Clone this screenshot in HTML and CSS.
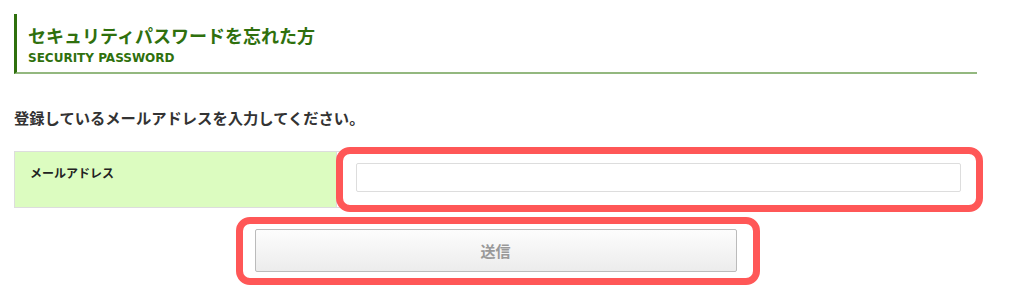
FILE: index.html
```html
<!DOCTYPE html>
<html lang="ja">

<head>
    <meta charset="UTF-8" />
    <title>セキュリティパスワードを忘れた方</title>
    <link rel="stylesheet" href="styles.css">
</head>

<body>
    <div class="page">
        <!-- 見出し -->
        <div class="heading">
            <h1>セキュリティパスワードを忘れた方</h1>
            <p class="sub">SECURITY PASSWORD</p>
        </div>

        <p class="lead">登録しているメールアドレスを入力してください。</p>

        <table class="form-table">
            <tr>
                <th>メールアドレス</th>
                <td><input type="text" class="mail-input" /></td>
            </tr>
        </table>

        <div class="submit-row">
            <button class="btn-submit">送信</button>
        </div>

        <!-- 注釈の枠 -->
        <div class="mark mark-input"></div>
        <div class="mark mark-button"></div>
    </div>
</body>

</html>
```

FILE: styles.css
```css
* {
    box-sizing: border-box;
    margin: 0;
    padding: 0;
    font-family: "Noto Sans CJK JP", "Noto Sans", sans-serif;
}

html,
body {
    background: #fff;
}

.page {
    position: relative;
    width: 977px;
    min-height: 294px;
    padding: 14px 0 0 14px;
}

.heading {
    border-left: 3px solid #2f700d;
    border-bottom: 2px solid #93b87f;
    padding: 9px 0 6px 11px;
    color: #2f700d;
}

.heading h1 {
    font-size: 18px;
    line-height: 24px;
    font-weight: bold;
}

.heading .sub {
    font-family: "DejaVu Sans", sans-serif;
    font-size: 12px;
    line-height: 16px;
    font-weight: bold;
    margin-top: 3px;
}

.lead {
    margin-top: 32px;
    font-size: 15.3px;
    line-height: 22px;
    font-weight: bold;
    color: #333;
}

.form-table {
    margin-top: 23px;
    width: 100%;
    border-collapse: collapse;
}

.form-table th,
.form-table td {
    border: 1px solid #ddd;
    vertical-align: top;
}

.form-table th {
    width: 322px;
    background: #dcfcc0;
    text-align: left;
    font-size: 12px;
    line-height: 18px;
    color: #222;
    padding: 12px 15px 14px 15px;
}

.form-table td {
    padding: 11px 15px 15px 19px;
}

.mail-input {
    display: block;
    width: 100%;
    height: 29px;
    border: 1px solid #ddd;
    border-radius: 2px;
}

.submit-row {
    margin-top: 21px;
    display: flex;
    justify-content: center;
}

.btn-submit {
    width: 482px;
    height: 43px;
    border: 1px solid #bbb;
    border-radius: 2px;
    background: linear-gradient(#fdfdfd, #ececec);
    color: #999;
    font-size: 15px;
    font-weight: bold;
}

/* 赤い注釈枠 */
.mark {
    position: absolute;
    border: 7px solid #ff5757;
    border-radius: 14px;
}

.mark-input {
    left: 336px;
    top: 147px;
    width: 647px;
    height: 65px;
}

.mark-button {
    left: 236px;
    top: 217px;
    width: 524px;
    height: 68px;
}
```
